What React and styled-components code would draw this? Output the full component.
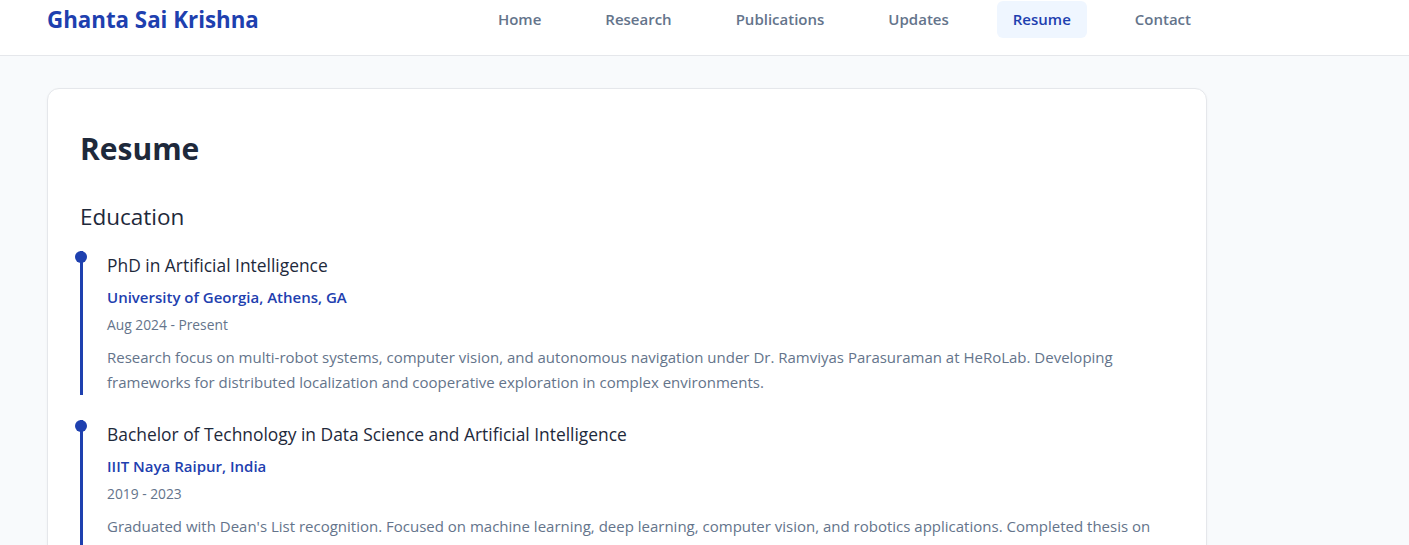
import React from "react";
import styled, { createGlobalStyle } from "styled-components";

const GlobalStyle = createGlobalStyle`
  * { box-sizing: border-box; }
  body {
    margin: 0;
    background: #f8fafc;
    font-family: "Open Sans", "Noto Sans", sans-serif;
    color: #1e293b;
  }
`;

const navItems = ["Home", "Research", "Publications", "Updates", "Resume", "Contact"];

const education = [
  {
    degree: "PhD in Artificial Intelligence",
    school: "University of Georgia, Athens, GA",
    dates: "Aug 2024 - Present",
    text:
      "Research focus on multi-robot systems, computer vision, and autonomous navigation under Dr. Ramviyas Parasuraman at HeRoLab. Developing frameworks for distributed localization and cooperative exploration in complex environments.",
  },
  {
    degree: "Bachelor of Technology in Data Science and Artificial Intelligence",
    school: "IIIT Naya Raipur, India",
    dates: "2019 - 2023",
    text:
      "Graduated with Dean's List recognition. Focused on machine learning, deep learning, computer vision, and robotics applications. Completed thesis on ensemble-based multi-robot exploration and mapping.",
  },
];

function App() {
  return (
    <>
      <GlobalStyle />
      <Header>
        <HeaderInner>
          <Logo>Ghanta Sai Krishna</Logo>
          <Nav>
            {navItems.map((item) => (
              <NavLink key={item} $active={item === "Resume"}>
                {item}
              </NavLink>
            ))}
          </Nav>
        </HeaderInner>
      </Header>
      <Main>
        <Card>
          <PageTitle>Resume</PageTitle>
          <SectionTitle>Education</SectionTitle>
          <Timeline>
            {education.map((e) => (
              <Entry key={e.degree}>
                <Degree>{e.degree}</Degree>
                <School>{e.school}</School>
                <Dates>{e.dates}</Dates>
                <Description>{e.text}</Description>
              </Entry>
            ))}
          </Timeline>
        </Card>
      </Main>
    </>
  );
}

const Header = styled.header`
  background: #fff;
  border-bottom: 1px solid #e5e7eb;
  padding: 1px 0 17px 47px;
`;

const HeaderInner = styled.div`
  width: 1160px;
  display: flex;
  align-items: center;
  justify-content: space-between;
`;

const Logo = styled.div`
  font-size: 22.3px;
  font-weight: 700;
  color: #1e40af;
  margin-top: -1px;
`;

const Nav = styled.nav`
  display: flex;
  gap: 32px;
`;

const NavLink = styled.a`
  display: block;
  padding: 8px 16px;
  line-height: 21px;
  border-radius: 6px;
  font-size: 15px;
  font-weight: 600;
  color: ${(p) => (p.$active ? "#1e40af" : "#64748b")};
  background: ${(p) => (p.$active ? "#eff6ff" : "transparent")};
  cursor: pointer;
`;

const Main = styled.main`
  padding: 32px 0 0 47px;
`;

const Card = styled.section`
  width: 1160px;
  background: #fff;
  border: 1px solid #e5e7eb;
  border-radius: 12px;
  box-shadow: 0 1px 3px rgba(15, 23, 42, 0.04);
  padding: 36px 32px 32px;
`;

const PageTitle = styled.h1`
  margin: 0 0 28px;
  font-size: 30px;
  line-height: 48px;
  font-weight: 700;
  color: #1e293b;
`;

const SectionTitle = styled.h2`
  margin: 0 0 18px;
  font-size: 22.5px;
  line-height: 32px;
  font-weight: 500;
  color: #1e293b;
`;

const Timeline = styled.div`
  display: flex;
  flex-direction: column;
  gap: 25px;
`;

const Entry = styled.div`
  position: relative;
  border-left: 3px solid #1e40af;
  padding-left: 24px;

  &::before {
    content: "";
    position: absolute;
    left: -8px;
    top: 0;
    width: 12px;
    height: 12px;
    border-radius: 50%;
    background: #1e40af;
  }
`;

const Degree = styled.h3`
  margin: 0;
  font-size: 17.4px;
  line-height: 28px;
  font-weight: 500;
  color: #1e293b;
`;

const School = styled.div`
  margin-top: 7px;
  font-size: 15px;
  line-height: 22px;
  font-weight: 600;
  color: #1e40af;
`;

const Dates = styled.div`
  margin-top: 7px;
  font-size: 13.8px;
  line-height: 20px;
  color: #64748b;
`;

const Description = styled.p`
  margin: 10px 0 0;
  font-size: 15px;
  line-height: 25px;
  color: #64748b;
`;

export default App;
